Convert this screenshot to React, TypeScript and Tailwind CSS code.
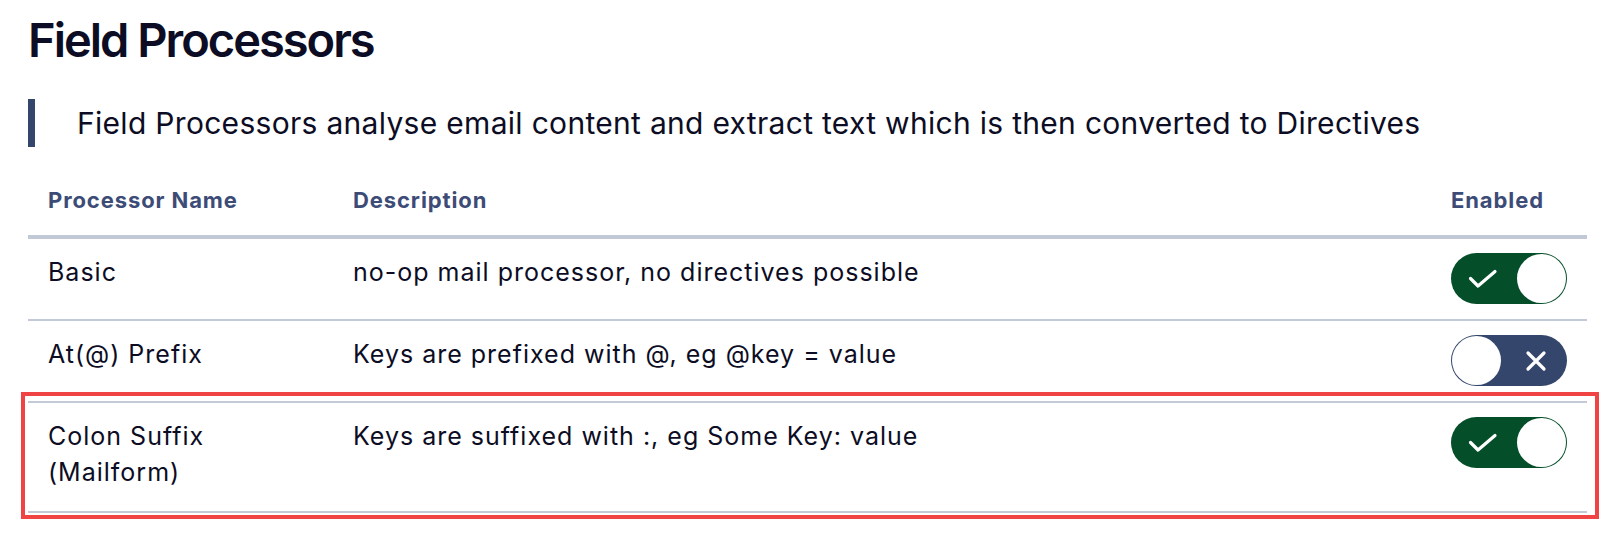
import React from 'react';

type Processor = {
  name: string[];
  description: string;
  enabled: boolean;
  highlighted?: boolean;
  rowClass: string;
};

const processors: Processor[] = [
  {
    name: ['Basic'],
    description: 'no-op mail processor, no directives possible',
    enabled: true,
    rowClass: 'h-[82px]',
  },
  {
    name: ['At(@) Prefix'],
    description: 'Keys are prefixed with @, eg @key = value',
    enabled: false,
    rowClass: 'h-[82px]',
  },
  {
    name: ['Colon Suffix', '(Mailform)'],
    description: 'Keys are suffixed with :, eg Some Key: value',
    enabled: true,
    highlighted: true,
    rowClass: 'h-[110px]',
  },
];

const Toggle: React.FC<{ on: boolean }> = ({ on }) =>
  on ? (
    <div className="relative w-[116px] h-[51px] rounded-full bg-[#044e29]">
      <svg className="absolute left-[17px] top-[16px]" width="30" height="20" viewBox="0 0 30 20" fill="none">
        <path d="M2.5 9.5 L10 17 L27 2.5" stroke="white" strokeWidth="3.2" strokeLinecap="round" strokeLinejoin="round" />
      </svg>
      <div className="absolute right-[1px] top-[1px] w-[49px] h-[49px] rounded-full bg-white"></div>
    </div>
  ) : (
    <div className="relative w-[116px] h-[51px] rounded-full bg-[#34466c]">
      <div className="absolute left-[1px] top-[1px] w-[49px] h-[49px] rounded-full bg-white"></div>
      <svg className="absolute left-[74px] top-[15px]" width="22" height="22" viewBox="0 0 22 22" fill="none">
        <path d="M3 3 L19 19 M19 3 L3 19" stroke="white" strokeWidth="3.2" strokeLinecap="round" />
      </svg>
    </div>
  );

export default function App() {
  return (
    <div className="w-[1616px] h-[535px] bg-white pl-[28px] pr-[29px] font-['Inter',sans-serif] text-[#0c0d24] overflow-hidden">
      <h1 className="pt-[12px] text-[47px] leading-[56px] font-semibold tracking-[-2px]">Field Processors</h1>

      <blockquote className="mt-[31px] border-l-[7px] border-[#34466c] pl-[42px] text-[30px] leading-[48px] tracking-[0.3px]">
        Field Processors analyse email content and extract text which is then converted to Directives
      </blockquote>

      <div className="mt-[18px]">
        <div className="grid grid-cols-[305px_1098px_156px] border-b-4 border-[#c1c9d6] text-[22px] leading-[30px] font-bold tracking-[0.9px] text-[#3d4c77]">
          <div className="pl-[20px] py-[20px]">Processor Name</div>
          <div className="pl-[20px] py-[20px]">Description</div>
          <div className="pl-[20px] py-[20px]">Enabled</div>
        </div>

        {processors.map((p) => (
          <div
            key={p.name[0]}
            className={`relative grid grid-cols-[305px_1098px_156px] border-b-2 border-[#c3cad7] text-[25px] leading-[36px] tracking-[1px] ${p.rowClass}`}
          >
            <div className="pl-[20px] pt-[15px]">
              {p.name.map((line) => (
                <div key={line}>{line}</div>
              ))}
            </div>
            <div className="pl-[20px] pt-[15px]">{p.description}</div>
            <div className="pl-[20px] pt-[14px]">
              <Toggle on={p.enabled} />
            </div>
            {p.highlighted && (
              <div className="absolute left-[-7px] top-[-11px] w-[1578px] h-[127px] border-4 border-[#f04444] pointer-events-none"></div>
            )}
          </div>
        ))}
      </div>
    </div>
  );
}
